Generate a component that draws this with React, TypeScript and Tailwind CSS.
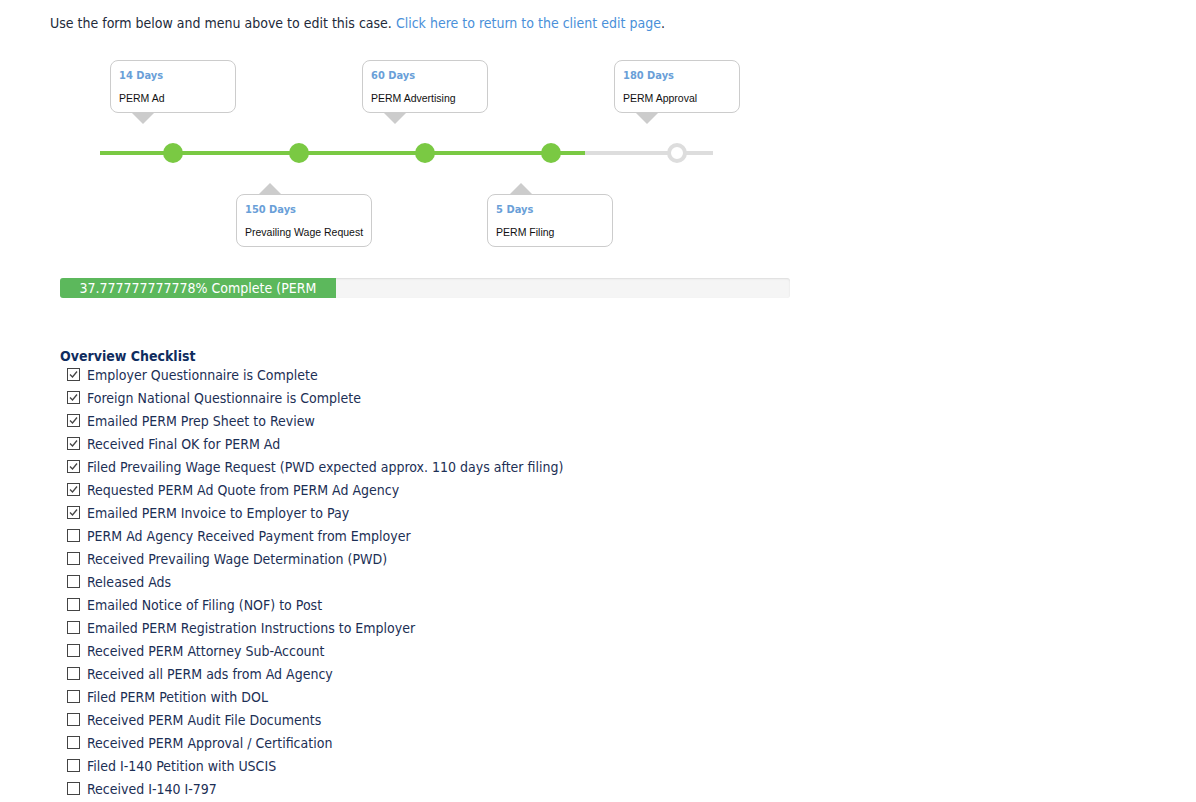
import React from "react";

const steps = [
  { days: "14 Days", label: "PERM Ad" },
  { days: "150 Days", label: "Prevailing Wage Request" },
  { days: "60 Days", label: "PERM Advertising" },
  { days: "5 Days", label: "PERM Filing" },
  { days: "180 Days", label: "PERM Approval" },
];

const checklist: [string, boolean][] = [
  ["Employer Questionnaire is Complete", true],
  ["Foreign National Questionnaire is Complete", true],
  ["Emailed PERM Prep Sheet to Review", true],
  ["Received Final OK for PERM Ad", true],
  ["Filed Prevailing Wage Request (PWD expected approx. 110 days after filing)", true],
  ["Requested PERM Ad Quote from PERM Ad Agency", true],
  ["Emailed PERM Invoice to Employer to Pay", true],
  ["PERM Ad Agency Received Payment from Employer", false],
  ["Received Prevailing Wage Determination (PWD)", false],
  ["Released Ads", false],
  ["Emailed Notice of Filing (NOF) to Post", false],
  ["Emailed PERM Registration Instructions to Employer", false],
  ["Received PERM Attorney Sub-Account", false],
  ["Received all PERM ads from Ad Agency", false],
  ["Filed PERM Petition with DOL", false],
  ["Received PERM Audit File Documents", false],
  ["Received PERM Approval / Certification", false],
  ["Filed I-140 Petition with USCIS", false],
  ["Received I-140 I-797", false],
];

const percent = 37.777777777778;

function Bubble({ days, label, up }: { days: string; label: string; up?: boolean }) {
  return (
    <div className="flex min-w-[126px] flex-col">
      {up && (
        <div className="ml-[23px] h-0 w-0 border-x-[11px] border-b-[11px] border-x-transparent border-b-[#cccccc]" />
      )}
      <div className="h-[53px] whitespace-nowrap rounded-[8px] border border-[#cccccc] bg-white px-[8px] pt-[8px]">
        <div className="text-[11px] font-bold leading-[14px] text-[#6a9fd8]">{days}</div>
        <div className="mt-[9px] text-[10.5px] leading-[13px] text-[#111111] [font-family:'Liberation_Sans',Arial,sans-serif]">
          {label}
        </div>
      </div>
      {!up && (
        <div className="ml-[22px] h-0 w-0 border-x-[11px] border-t-[11px] border-x-transparent border-t-[#cccccc]" />
      )}
    </div>
  );
}

function Box({ checked }: { checked: boolean }) {
  return (
    <span className="flex h-[13px] w-[13px] shrink-0 items-center justify-center border border-[#444444] bg-white">
      {checked && (
        <svg width="11" height="11" viewBox="0 0 11 11">
          <path d="M2 5.5 L4.5 8 L9 2.5" fill="none" stroke="#444444" strokeWidth="1.3" />
        </svg>
      )}
    </span>
  );
}

export default function App() {
  const dots = [73, 199, 325, 451];
  return (
    <div className="min-h-[802px] bg-white pl-[50px] pt-[15px] text-[14px] text-[#1c2f55] [font-family:'DejaVu_Sans_Condensed','DejaVu_Sans',Tahoma,sans-serif]">
      <p className="leading-[16px] text-[#222a3a]">
        Use the form below and menu above to edit this case.{" "}
        <a className="text-[#4a90d9]">Click here to return to the client edit page</a>.
      </p>

      {/* timeline */}
      <div className="mt-[29px] flex flex-col">
        <div className="ml-[60px] flex gap-[126px]">
          <Bubble {...steps[0]} />
          <Bubble {...steps[2]} />
          <Bubble {...steps[4]} />
        </div>
        <div className="relative ml-[50px] mt-[19px] h-[20px] w-[613px]">
          <div className="absolute left-0 top-[8px] h-[4px] w-[485px] bg-[#7ac943]" />
          <div className="absolute left-[485px] top-[8px] h-[4px] w-[128px] bg-[#dddddd]" />
          {dots.map((x) => (
            <div
              key={x}
              className="absolute top-0 h-[20px] w-[20px] rounded-full bg-[#7ac943]"
              style={{ left: x - 10 }}
            />
          ))}
          <div className="absolute left-[567px] top-0 h-[20px] w-[20px] rounded-full border-[4px] border-[#dddddd] bg-white" />
        </div>
        <div className="ml-[186px] mt-[20px] flex gap-[115px]">
          <Bubble {...steps[1]} up />
          <Bubble {...steps[3]} up />
        </div>
      </div>

      {/* progress */}
      <div className="ml-[10px] mt-[31px] h-[20px] w-[730px] overflow-hidden rounded-[3px] bg-[#f5f5f5] shadow-[inset_0_1px_2px_rgba(0,0,0,0.1)]">
        <div
          className="flex h-full items-center justify-center overflow-hidden whitespace-nowrap bg-[#5cb85c] text-[14px] leading-[20px] text-white"
          style={{ width: `${percent}%` }}
        >
          {percent}% Complete (PERM
        </div>
      </div>

      {/* checklist */}
      <div className="ml-[10px] mt-[50px]">
        <h4 className="text-[14px] font-bold leading-[16px] text-[#0f2c5e]">Overview Checklist</h4>
        <ul className="-mt-px">
          {checklist.map(([text, checked]) => (
            <li key={text} className="flex h-[23px] items-center gap-[7px] pl-[7px]">
              <Box checked={checked} />
              <span className="leading-[16px]">{text}</span>
            </li>
          ))}
        </ul>
      </div>
    </div>
  );
}
